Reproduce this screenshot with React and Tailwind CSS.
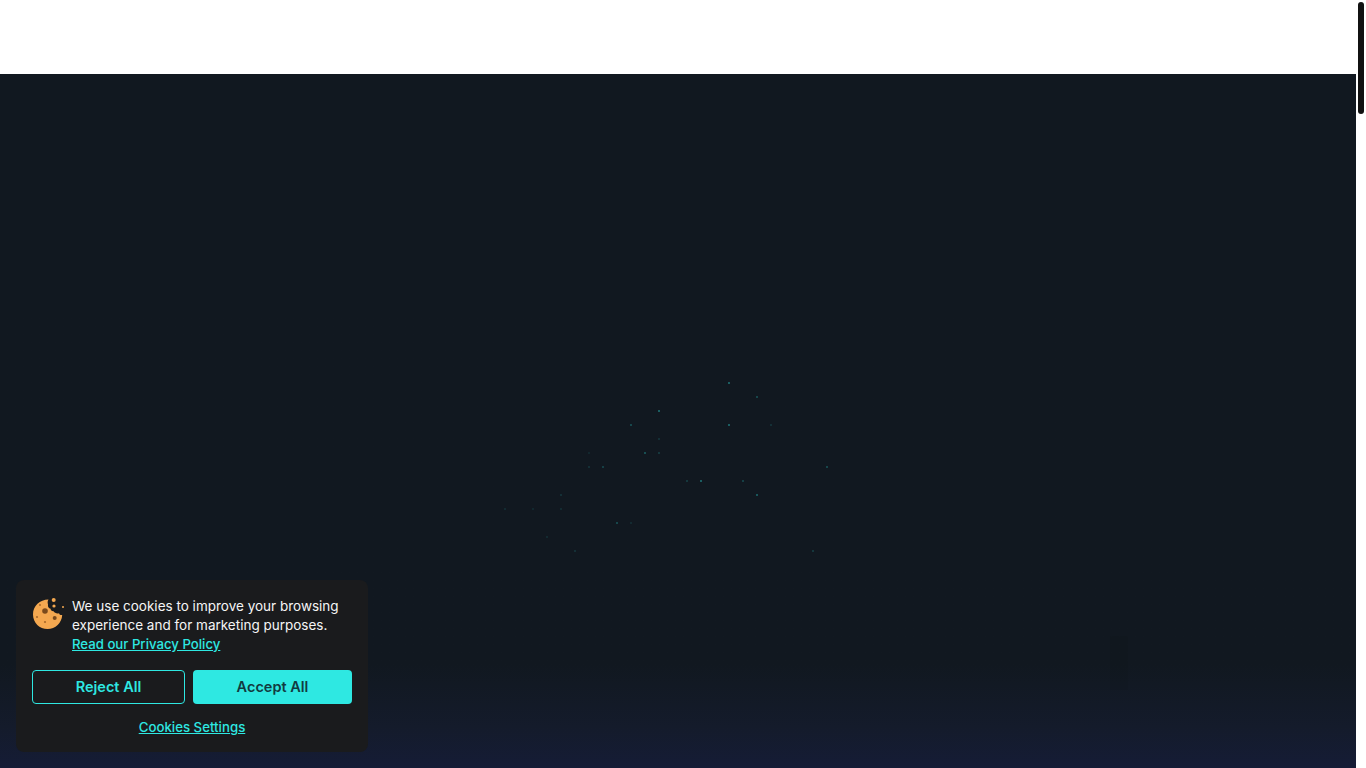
const dots = [
  [729, 383, 0.45], [757, 397, 0.3], [659, 411, 0.45], [631, 425, 0.3], [729, 425, 0.45],
  [771, 425, 0.15], [659, 439, 0.15], [645, 453, 0.35], [659, 453, 0.2], [589, 453, 0.1],
  [589, 467, 0.15], [603, 467, 0.25], [827, 467, 0.3], [687, 481, 0.2], [701, 481, 0.45],
  [743, 481, 0.25], [561, 495, 0.15], [757, 495, 0.4], [505, 509, 0.12], [533, 509, 0.1],
  [561, 509, 0.12], [617, 523, 0.3], [631, 523, 0.12], [547, 537, 0.12], [575, 551, 0.15],
  [813, 551, 0.2],
];

function CookieIcon() {
  return (
    <svg width="32" height="32" viewBox="0 0 32 32" className="shrink-0">
      <path
        d="M16.5 1.6 C7.8 1.6 1 8.2 1 16.4 C1 24.6 7.6 31 15.6 31 C23.4 31 29.8 25 30.2 17 C28.8 17.4 27.4 16.6 27 15.2 C24.8 15.8 22.6 15 21.6 13.2 C20 13.4 18.6 12.4 18.6 10.8 C16.6 10.2 15.6 8.4 16 6.4 C15.4 4.6 15.6 3 16.5 1.6 Z"
        fill="#f4a850"
      />
      <circle cx="13" cy="13" r="2.8" fill="#7a4a1c" />
      <circle cx="22.7" cy="20" r="2" fill="#7a4a1c" />
      <circle cx="8" cy="7" r="1" fill="#a8682a" />
      <circle cx="5" cy="19" r="1.1" fill="#a8682a" />
      <circle cx="13" cy="24" r="1.1" fill="#a8682a" />
      <circle cx="21.7" cy="2" r="2" fill="#f4a850" />
      <circle cx="22" cy="8" r="1.6" fill="#f4a850" />
      <circle cx="31" cy="9" r="1" fill="#f4a850" />
    </svg>
  );
}

function CookieBanner() {
  return (
    <div className="absolute left-4 bottom-4 w-[352px] rounded-lg bg-[#1a1b1d] px-4 pt-[17px] pb-[15px]">
      <div className="flex gap-2">
        <div className="pt-[1px]">
          <CookieIcon />
        </div>
        <p className="text-[13.5px] leading-[19px] text-[#f5f5f5]">
          We use cookies to improve your browsing experience and for marketing purposes.{' '}
          <a className="text-[13.2px] font-medium text-[#2ee8e2] underline">Read our Privacy Policy</a>
        </p>
      </div>
      <div className="mt-4 flex gap-2">
        <button className="h-[34px] w-[153px] rounded border border-[#2ee8e2] text-[14.5px] font-semibold text-[#2ee8e2]">
          Reject All
        </button>
        <button className="h-[34px] w-[159px] rounded bg-[#2ee8e2] text-[14.5px] font-semibold text-[#123a40]">
          Accept All
        </button>
      </div>
      <div className="mt-[13px] text-center text-[13.25px] leading-[20px]">
        <a className="font-medium text-[#2ee8e2] underline">Cookies Settings</a>
      </div>
    </div>
  );
}

export default function App() {
  return (
    <div className="relative flex h-screen overflow-hidden bg-white font-['Inter',sans-serif]">
      <div className="flex w-[1356px] flex-col">
        <header className="h-[74px] bg-white" />
        <main className="flex-1 bg-gradient-to-b from-[#111820] from-[85%] via-[#141b2b] via-[94%] to-[#151c36]" />
      </div>
      <svg className="absolute left-0 top-0" width="1356" height="768">
        {dots.map(([x, y, o]) => (
          <rect key={`${x}-${y}`} x={x - 1} y={y - 1} width="2" height="2" fill="#2ee8e2" opacity={o * 0.75} />
        ))}
        <rect x="1110" y="636" width="18" height="54" fill="#000" opacity="0.04" />
      </svg>
      <div className="flex-1 p-[2px]">
        <div className="h-[112px] w-[6px] rounded-full bg-[#111111]" />
      </div>
      <CookieBanner />
    </div>
  );
}
